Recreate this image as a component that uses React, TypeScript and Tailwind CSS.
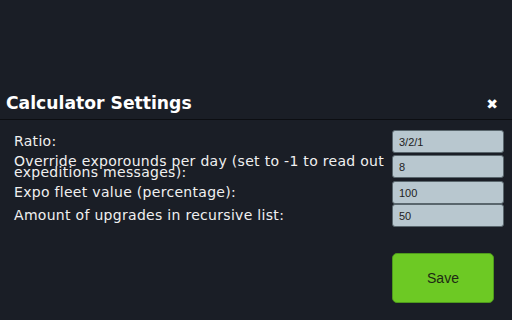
import { useState } from "react";

// mt per row copies the uneven spacing of the original form
const FIELDS = [
  { label: "Ratio:", value: "3/2/1", mt: "mt-0" },
  { label: "Override exporounds per day (set to -1 to read out expeditions messages):", value: "8", mt: "mt-[2px]" },
  { label: "Expo fleet value (percentage):", value: "100", mt: "mt-[3px]" },
  { label: "Amount of upgrades in recursive list:", value: "50", mt: "mt-0" },
];

export default function App() {
  const [values, setValues] = useState(FIELDS.map((f) => f.value));

  return (
    <div className="w-[512px] h-[320px] overflow-hidden bg-[#1a1e26] font-['DejaVu_Sans',Verdana,sans-serif] text-white">
      <div className="pt-[88px]">
        <div className="flex items-center justify-between pl-[6px] pr-[14px] h-[32px] border-b border-[#0c0e12]">
          <h1 className="text-[17.2px] font-bold leading-none">Calculator Settings</h1>
          <button className="text-[14px] font-bold leading-none text-white">✖</button>
        </div>

        <div className="pl-[14px] pr-[8px] pt-[10px] flex flex-col">
          {FIELDS.map((f, i) => (
            <div key={f.label} className={`flex items-center ${f.mt}`}>
              <label className="flex-1 min-w-0 text-[14px] tracking-[0.3px] leading-[11px] text-[#f0f0f0]">{f.label}</label>
              <input
                value={values[i]}
                onChange={(e) => setValues(values.map((v, j) => (j === i ? e.target.value : v)))}
                className="w-[112px] h-[23px] shrink-0 rounded-[3px] border border-[#59666d] bg-[#b8c7cf] px-[6px] text-[11px] text-[#222] font-['Liberation_Sans',Arial,sans-serif] outline-none"
              />
            </div>
          ))}
        </div>

        <div className="flex justify-end pr-[18px] pt-[26px]">
          <button className="w-[102px] h-[50px] rounded-[5px] border border-[#4e9a1c] bg-[#6dc924] text-[14px] text-[#1e2a14] font-['Liberation_Sans',Arial,sans-serif]">
            Save
          </button>
        </div>
      </div>
    </div>
  );
}
